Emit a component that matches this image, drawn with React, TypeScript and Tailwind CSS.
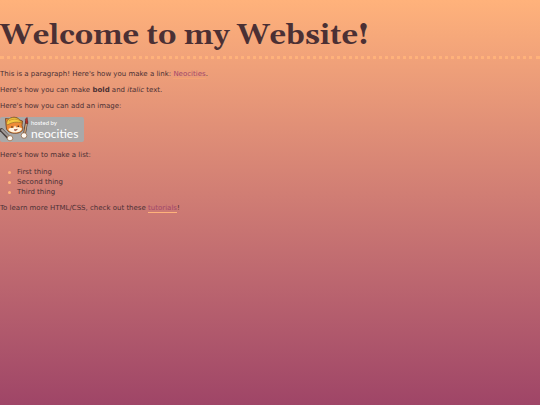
function NeocitiesButton() {
  return (
    <a
      href="https://neocities.org"
      aria-label="hosted by neocities"
      className="flex h-[25px] w-[84px] items-center rounded-[2px] bg-[#a9a9a9] text-white"
    >
      <svg viewBox="0 0 31 29" className="-my-1 h-[29px] w-[31px] shrink-0" aria-hidden="true">
        <path d="M1.5 15 9 23" stroke="#4a4240" strokeWidth="4" strokeLinecap="round" />
        <path d="M2 15 9 22" stroke="#a29b97" strokeWidth="1.8" strokeLinecap="round" />
        <path d="M26.5 7 24.5 19" stroke="#4e3a32" strokeWidth="2.8" strokeLinecap="round" />
        <path d="M26.5 8 24.5 19" stroke="#d3a577" strokeWidth="1.4" strokeLinecap="round" />
        <path d="M25.3 4 27.2 2.5 28 8.5 25.6 8.5Z" fill="#b42f28" stroke="#5c2a24" strokeWidth=".5" />
        <path
          d="M6 10 5.5 3.5 9.5 4C12 1.5 17 1.5 19.5 5L22.5 6 22 11C24 14 22.5 17 18 18 13 19 8 17.5 6.5 14Z"
          fill="#ee8b36"
          stroke="#6b4023"
          strokeWidth=".8"
          strokeLinejoin="round"
        />
        <path d="M8.5 14C10 12 12.5 13.5 14 12.5 14.5 10.5 15.5 10 16 12.5 18.5 12 20.5 12.5 22 13.5 21.5 16.5 18 17.5 15 17.5 11.5 17.4 8.5 16 8.5 14Z" fill="#fff2dc" />
        <path d="M6.5 8.5C7 1.5 17.5 .5 20.5 6L22.5 8C17 6.5 12 7 7.5 10Z" fill="#f4c940" stroke="#8c6029" strokeWidth=".6" />
        <path d="M9 6C12 3.5 17 3.5 20 6" stroke="#b98429" strokeWidth=".7" fill="none" />
        <circle cx="12" cy="12" r=".8" fill="#33231f" />
        <circle cx="18.3" cy="11.3" r=".8" fill="#33231f" />
        <path d="M14 14.8Q15.5 16.8 17.5 14.3Z" fill="#bd3d34" stroke="#6b3429" strokeWidth=".4" />
        <ellipse cx="10" cy="23.2" rx="2.8" ry="2.6" fill="#fffaf3" stroke="#8a5a35" strokeWidth=".7" />
        <ellipse cx="24" cy="20.5" rx="2.8" ry="2.8" fill="#fffaf3" stroke="#8a5a35" strokeWidth=".7" />
      </svg>
      <span className="flex flex-col font-[Lato,sans-serif]">
        <span className="text-[6px] leading-[8px]">hosted by</span>
        <span className="text-[12px] leading-[14px]">neocities</span>
      </span>
    </a>
  );
}

function ListItem({ children }: { children: string }) {
  return (
    <li className="flex items-center gap-[6px] before:size-[3px] before:rounded-full before:bg-[#ffb27b]">{children}</li>
  );
}

export default function App() {
  return (
    <main className="flow-root min-h-screen bg-linear-to-b from-[#ffb27b] to-[#9f4567] font-[Verdana,'DejaVu_Sans',sans-serif] text-[7px] leading-[10px] text-[#4b3034]">
      <h1 className="mt-4 border-b-[3px] border-dotted border-[#ffb27b] font-[Gelasio,Georgia,'Liberation_Serif',serif] text-[29px] leading-10 font-bold">
        Welcome to my Website!
      </h1>
      <div className="mt-2.5 flex flex-col gap-1.5">
        <p>
          This is a paragraph! Here's how you make a link:{" "}
          <a href="https://neocities.org" className="border-b border-[#f5a373] text-[#a1476a]">Neocities</a>.
        </p>
        <p>
          Here's how you can make <strong>bold</strong> and <em>italic</em> text.
        </p>
        <p>Here's how you can add an image:</p>
        <div className="pb-0.5"><NeocitiesButton /></div>
        <p>Here's how to make a list:</p>
        <ul className="pt-px pl-2">
          <ListItem>First thing</ListItem>
          <ListItem>Second thing</ListItem>
          <ListItem>Third thing</ListItem>
        </ul>
        <p>
          To learn more HTML/CSS, check out these{" "}
          <a href="https://neocities.org/tutorials" className="border-b border-[#ffb27b] text-[#a1476a]">tutorials</a>!
        </p>
      </div>
    </main>
  );
}
